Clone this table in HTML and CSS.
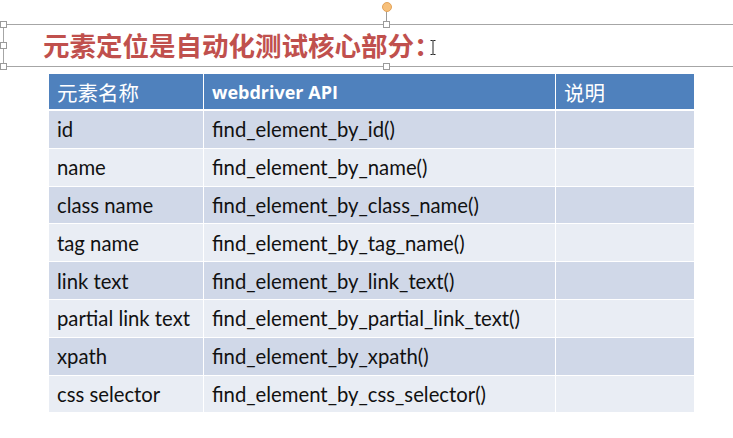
FILE: index.html
```html
<!DOCTYPE html>
<html lang="zh-CN">
<head>
<meta charset="utf-8">
<title>元素定位</title>
<link rel="stylesheet" href="styles.css">
</head>
<body>
<div class="slide">
  <div class="title-box">
    <span class="handle h-tl"></span>
    <span class="handle h-ml"></span>
    <span class="handle h-bl"></span>
    <span class="handle h-tc"></span>
    <span class="handle h-bc"></span>
    <span class="rot-line"></span>
    <span class="rot-knob"></span>
    <h1 class="title">元素定位是自动化测试核心部分：</h1>
    <svg class="ibeam" width="6" height="15" viewBox="0 0 6 15"><path d="M0.5 0.5h2l0.5 0.5 0.5-0.5h2M3 1v13M0.5 14.5h2l0.5-0.5 0.5 0.5h2" fill="none" stroke="#222" stroke-width="1"/></svg>
  </div>
  <table class="grid">
    <thead>
      <tr><th class="c1 cjk">元素名称</th><th class="c2">webdriver API</th><th class="c3 cjk">说明</th></tr>
    </thead>
    <tbody>
      <tr><td>id</td><td>find_element_by_id()</td><td></td></tr>
      <tr><td>name</td><td>find_element_by_name()</td><td></td></tr>
      <tr><td>class name</td><td>find_element_by_class_name()</td><td></td></tr>
      <tr><td>tag name</td><td>find_element_by_tag_name()</td><td></td></tr>
      <tr><td>link text</td><td>find_element_by_link_text()</td><td></td></tr>
      <tr><td>partial link text</td><td>find_element_by_partial_link_text()</td><td></td></tr>
      <tr><td>xpath</td><td>find_element_by_xpath()</td><td></td></tr>
      <tr><td>css selector</td><td>find_element_by_css_selector()</td><td></td></tr>
    </tbody>
  </table>
</div>
</body>
</html>
```
FILE: styles.css
```css
html, body {
  margin: 0;
  padding: 0;
  background: #ffffff;
}
.slide {
  width: 733px;
  height: 438px;
  overflow: hidden;
}
.title-box {
  position: relative;
  margin: 24px 0 0 3px;
  height: 41px;
  border-top: 1px solid #a6a6a6;
  border-bottom: 1px solid #a6a6a6;
  border-left: 1px solid #a6a6a6;
  display: flex;
  align-items: center;
  padding-left: 39px;
}
.title {
  margin: 0;
  font-family: "Noto Sans CJK SC", "Noto Sans", sans-serif;
  font-weight: 700;
  font-size: 26.5px;
  line-height: 1;
  color: #c0504d;
}
.ibeam {
  position: absolute;
  left: 426px;
  top: 15px;
}
.handle {
  position: absolute;
  width: 5px;
  height: 5px;
  background: #fff;
  border: 1px solid #9a9a9a;
}
.h-tl { left: -4px; top: -4px; }
.h-ml { left: -4px; top: 17px; }
.h-bl { left: -4px; bottom: -4px; }
.h-tc { left: 379px; top: -4px; }
.h-bc { left: 379px; bottom: -4px; }
.rot-line {
  position: absolute;
  left: 382px;
  top: -15px;
  width: 1px;
  height: 11px;
  background: #9a9a9a;
}
.rot-knob {
  position: absolute;
  left: 378px;
  top: -23px;
  width: 8px;
  height: 8px;
  border-radius: 50%;
  background: #f7c07a;
  border: 1px solid #e3a35a;
}
.grid {
  margin: 6px 0 0 48px;
  width: 647px;
  border-collapse: collapse;
  font-family: "Lato", "Noto Sans CJK SC", sans-serif;
  font-size: 20.3px;
  color: #111;
}
.grid th, .grid td {
  text-align: left;
  padding: 0 0 0 8px;
  border: 1px solid #ffffff;
  white-space: nowrap;
}
.grid th {
  background: #4f81bd;
  color: #fff;
  height: 35px;
  border-bottom: 2px solid #fff;
  font-family: "Open Sans", sans-serif;
  font-weight: 700;
  font-size: 18px;
}
.grid th.cjk {
  font-family: "Noto Sans CJK SC", sans-serif;
  font-weight: 400;
  font-size: 20.5px;
}
.c1 { width: 146px; }
.c2 { width: 343px; }
.grid td {
  height: 36.8px;
}
.grid tbody tr:nth-child(odd) td { background: #d0d8e8; }
.grid tbody tr:nth-child(even) td { background: #e9edf4; }
```
